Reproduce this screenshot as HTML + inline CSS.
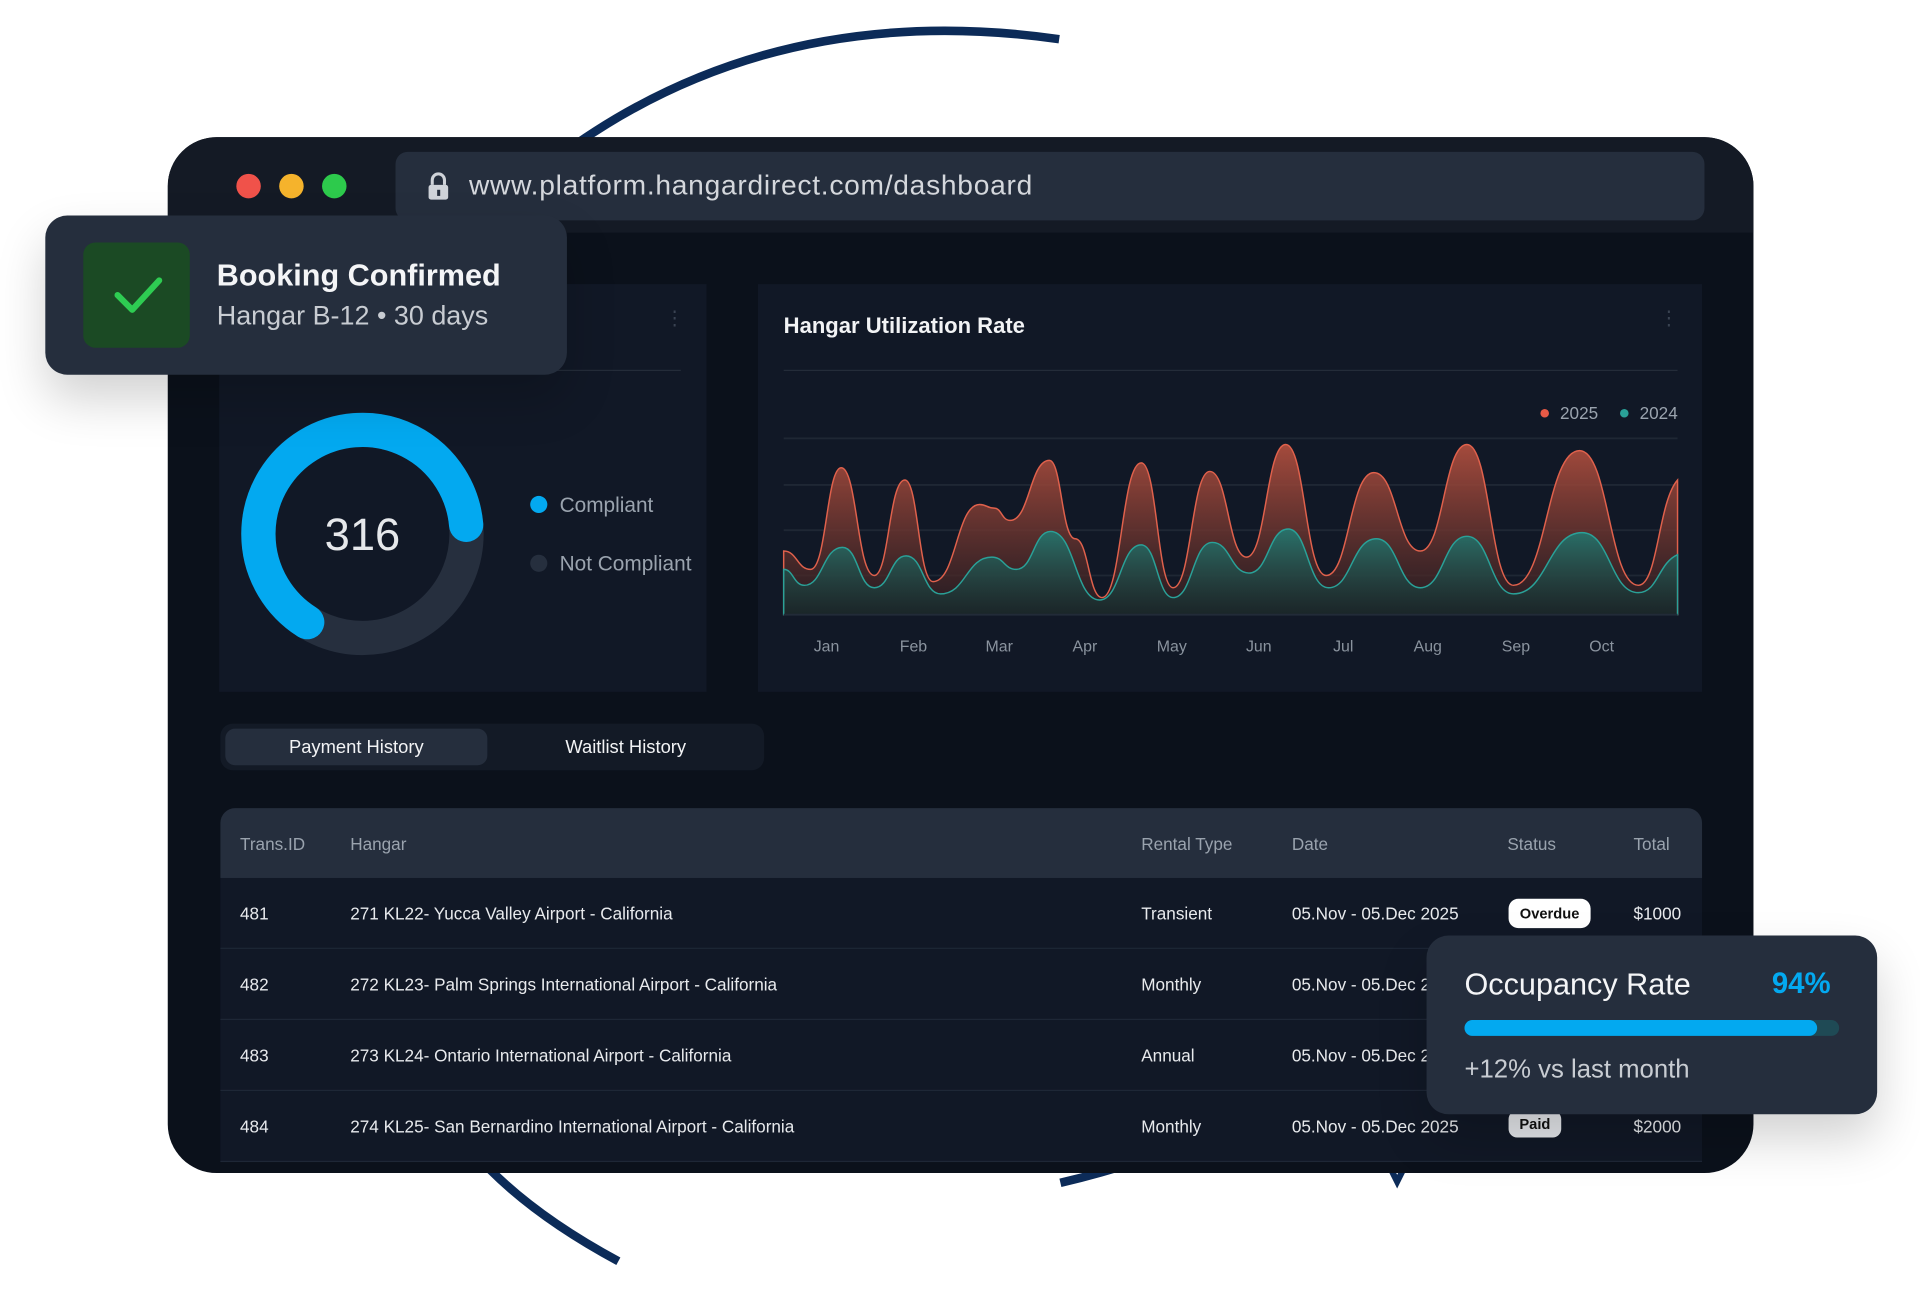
<!DOCTYPE html>
<html><head><meta charset="utf-8"><style>
*{margin:0;padding:0;box-sizing:border-box}
html,body{width:1920px;height:1310px;overflow:hidden;background:#fff}
#s{position:absolute;left:0;top:0;width:1568px;height:1070px;transform:scale(1.22449);transform-origin:0 0;font-family:"Liberation Sans",sans-serif}
.a{position:absolute}
.t{position:absolute;white-space:nowrap;line-height:1}
#win{left:137px;top:112px;width:1295px;height:846px;border-radius:40px;background:#0b111b;overflow:hidden}
.row{position:absolute;left:0;width:1210px;height:58px;background:#111826;border-bottom:1.5px solid #1e2736}
.row .t{font-size:14px;color:#e8eaed;top:22px}
</style></head><body><div id="s">
<svg class="a" style="left:0;top:0" width="1568" height="1070">
<path d="M470 118 Q640 0 865 32" stroke="#0c2b58" stroke-width="7" fill="none"/>
<path d="M400 955 Q440 995 505 1030" stroke="#0c2b58" stroke-width="7" fill="none"/>
<path d="M866 966 Q900 958 930 948" stroke="#0c2b58" stroke-width="7" fill="none"/>
<path d="M1136 955 L1141 965 L1146 955" stroke="#0c2b58" stroke-width="5" fill="none"/>
</svg>
<div id="win" class="a">
 <div class="a" style="left:0;top:0;width:1295px;height:78px;background:#141a25"></div>
 <div class="a" style="left:56px;top:30px;width:20px;height:20px;border-radius:50%;background:#f0524a"></div>
 <div class="a" style="left:91px;top:30px;width:20px;height:20px;border-radius:50%;background:#f5b32c"></div>
 <div class="a" style="left:126px;top:30px;width:20px;height:20px;border-radius:50%;background:#2dca4c"></div>
 <div class="a" style="left:186px;top:12px;width:1069px;height:56px;border-radius:10px;background:#252e3d"></div>
 <svg class="a" style="left:210px;top:27px" width="22" height="26"><path d="M6 12 V8 a5 5 0 0 1 10 0 V12" stroke="#cfd3d9" stroke-width="2.5" fill="none"/><rect x="3" y="12" width="16" height="12" rx="2" fill="#cfd3d9"/><rect x="10" y="16" width="2.5" height="5" fill="#252e3d"/></svg>
 <div class="t" style="left:246px;top:28px;font-size:23px;letter-spacing:0.6px;color:#d4d7dc">www.platform.hangardirect.com/dashboard</div>

 <div class="a" style="left:42px;top:120px;width:398px;height:333px;background:#111826"></div>
 <div class="a" style="left:48px;top:190px;width:371px;height:1px;background:#242c39"></div>
 <div class="t" style="left:406px;top:141px;font-size:16px;color:#3a4352">⋮</div>
 <svg class="a" style="left:59px;top:225px" width="200" height="200">
  <circle cx="100" cy="99" r="85" stroke="#262f3e" stroke-width="28" fill="none"/>
  <path d="M54.9 171.1 A85 85 0 1 1 184.7 91.6" stroke="#03a9f0" stroke-width="28" fill="none" stroke-linecap="round"/>
 </svg>
 <div class="t" style="left:109px;top:306px;width:100px;text-align:center;font-size:37px;color:#e6e8eb">316</div>
 <div class="a" style="left:296px;top:293px;width:14px;height:14px;border-radius:50%;background:#03a9f0"></div>
 <div class="t" style="left:320px;top:292px;font-size:17px;color:#9aa3ae">Compliant</div>
 <div class="a" style="left:296px;top:341px;width:14px;height:14px;border-radius:50%;background:#262f3e"></div>
 <div class="t" style="left:320px;top:340px;font-size:17px;color:#9aa3ae">Not Compliant</div>

 <div class="a" style="left:482px;top:120px;width:771px;height:333px;background:#111826"></div>
 <div class="t" style="left:503px;top:145px;font-size:18px;font-weight:bold;color:#f2f3f5">Hangar Utilization Rate</div>
 <div class="t" style="left:1218px;top:141px;font-size:16px;color:#3a4352">⋮</div>
 <div class="a" style="left:503px;top:190px;width:730px;height:1px;background:#242c39"></div>
 <div class="a" style="left:1121px;top:222px;width:7px;height:7px;border-radius:50%;background:#e85a46"></div>
 <div class="t" style="left:1137px;top:218px;font-size:14px;color:#9aa3ae">2025</div>
 <div class="a" style="left:1186px;top:222px;width:7px;height:7px;border-radius:50%;background:#2aa198"></div>
 <div class="a" style="left:1202px;top:218px;width:31px;height:16px;overflow:hidden"><div class="t" style="left:0;top:0;font-size:14px;color:#9aa3ae">2024</div></div>
</div>
<svg class="a" style="left:0;top:0" width="1568" height="1070">
 <defs>
  <linearGradient id="gr" x1="0" y1="0" x2="0" y2="1"><stop offset="0" stop-color="#b5503f" stop-opacity=".9"/><stop offset="1" stop-color="#2a1c20" stop-opacity=".7"/></linearGradient>
  <linearGradient id="gt" x1="0" y1="0" x2="0" y2="1"><stop offset="0" stop-color="#237a72" stop-opacity=".9"/><stop offset="1" stop-color="#12302f" stop-opacity=".5"/></linearGradient>
 </defs>
 <g stroke="#1f2734" stroke-width="1.5"><line x1="640" y1="358" x2="1370" y2="358"/><line x1="640" y1="396" x2="1370" y2="396"/><line x1="640" y1="433" x2="1370" y2="433"/><line x1="640" y1="470" x2="1370" y2="470"/></g>
 <path fill="url(#gr)" stroke="#e0614c" stroke-width="1.2" d="M640 450 C651 450,651 465,662 465 C675 465,675 382,687 382 C700 382,700 470,714 470 C726 470,726 392,739 392 C750 392,750 475,762 475 C781 475,781 412,800 412 C806 412,806 415,812 415 C818 415,818 425,825 425 C841 425,841 376,857 376 C867 376,867 440,878 440 C889 440,889 488,900 488 C916 488,916 378,932 378 C945 378,945 480,958 480 C973 480,973 385,988 385 C1003 385,1003 455,1018 455 C1034 455,1034 363,1050 363 C1066 363,1066 470,1083 470 C1102 470,1102 386,1122 386 C1141 386,1141 450,1160 450 C1179 450,1179 363,1198 363 C1217 363,1217 478,1236 478 C1263 478,1263 368,1290 368 C1314 368,1314 478,1338 478 C1354 478,1354 410,1370 392 L1370 502 L640 502 Z"/>
 <path fill="url(#gt)" stroke="#2aa198" stroke-width="1.2" d="M640 465 C648 465,648 478,657 478 C672 478,672 447,688 447 C701 447,701 480,714 480 C727 480,727 454,740 454 C754 454,754 485,768 485 C789 485,789 455,810 455 C820 455,820 465,830 465 C844 465,844 434,858 434 C878 434,878 490,898 490 C915 490,915 445,932 445 C945 445,945 488,958 488 C974 488,974 443,990 443 C1005 443,1005 468,1020 468 C1036 468,1036 432,1052 432 C1068 432,1068 480,1085 480 C1104 480,1104 440,1124 440 C1142 440,1142 480,1160 480 C1179 480,1179 438,1198 438 C1217 438,1217 485,1236 485 C1264 485,1264 435,1292 435 C1315 435,1315 484,1338 484 C1354 484,1354 460,1370 453 L1370 502 L640 502 Z"/>
 <line x1="640" y1="502" x2="1370" y2="502" stroke="#222b38" stroke-width="1.5"/>
 <g font-family="Liberation Sans" font-size="13" fill="#8a939e" text-anchor="middle"><text x="675" y="532">Jan</text><text x="746" y="532">Feb</text><text x="816" y="532">Mar</text><text x="886" y="532">Apr</text><text x="957" y="532">May</text><text x="1028" y="532">Jun</text><text x="1097" y="532">Jul</text><text x="1166" y="532">Aug</text><text x="1238" y="532">Sep</text><text x="1308" y="532">Oct</text></g>
</svg>

<div class="a" style="left:137px;top:112px;width:1295px;height:846px;border-radius:40px;overflow:hidden;pointer-events:none">
 <div class="a" style="left:43px;top:479px;width:444px;height:38px;border-radius:10px;background:#131a26"></div>
 <div class="a" style="left:47px;top:483px;width:214px;height:30px;border-radius:8px;background:#252e3d"></div>
 <div class="t" style="left:47px;top:491px;width:214px;text-align:center;font-size:15px;color:#f2f3f5">Payment History</div>
 <div class="t" style="left:270px;top:491px;width:208px;text-align:center;font-size:15px;color:#f2f3f5">Waitlist History</div>
 <div class="a" style="left:43px;top:548px;width:1210px;height:300px">
  <div class="a" style="left:0;top:0;width:1210px;height:57px;background:#252e3d;border-radius:12px 12px 0 0">
   <div class="t" style="left:16px;top:22px;font-size:14px;color:#9aa3ae">Trans.ID</div>
   <div class="t" style="left:106px;top:22px;font-size:14px;color:#9aa3ae">Hangar</div>
   <div class="t" style="left:752px;top:22px;font-size:14px;color:#9aa3ae">Rental Type</div>
   <div class="t" style="left:875px;top:22px;font-size:14px;color:#9aa3ae">Date</div>
   <div class="t" style="left:1051px;top:22px;font-size:14px;color:#9aa3ae">Status</div>
   <div class="t" style="left:1154px;top:22px;font-size:14px;color:#9aa3ae">Total</div>
  </div>
  <div class="row" style="top:57px"><div class="t" style="left:16px">481</div><div class="t" style="left:106px">271 KL22- Yucca Valley Airport - California</div><div class="t" style="left:752px">Transient</div><div class="t" style="left:875px">05.Nov - 05.Dec 2025</div><div class="a" style="left:1052px;top:17px;width:67px;height:24px;border-radius:8px;background:#fff;font-size:12px;font-weight:bold;color:#111;text-align:center;line-height:24px">Overdue</div><div class="t" style="left:1154px">$1000</div></div>
  <div class="row" style="top:115px"><div class="t" style="left:16px">482</div><div class="t" style="left:106px">272 KL23- Palm Springs International Airport - California</div><div class="t" style="left:752px">Monthly</div><div class="t" style="left:875px">05.Nov - 05.Dec 2025</div></div>
  <div class="row" style="top:173px"><div class="t" style="left:16px">483</div><div class="t" style="left:106px">273 KL24- Ontario International Airport - California</div><div class="t" style="left:752px">Annual</div><div class="t" style="left:875px">05.Nov - 05.Dec 2025</div></div>
  <div class="row" style="top:231px"><div class="t" style="left:16px">484</div><div class="t" style="left:106px">274 KL25- San Bernardino International Airport - California</div><div class="t" style="left:752px">Monthly</div><div class="t" style="left:875px">05.Nov - 05.Dec 2025</div><div class="a" style="left:1052px;top:16px;width:43px;height:22px;border-radius:7px;background:#e5e7eb;font-size:12px;font-weight:bold;color:#111;text-align:center;line-height:22px">Paid</div><div class="t" style="left:1154px">$2000</div></div>
 </div>
</div>

<div class="a" style="left:37px;top:176px;width:426px;height:130px;border-radius:18px;background:#252e3d;box-shadow:0 20px 40px rgba(0,0,0,.18)">
 <div class="a" style="left:31px;top:22px;width:87px;height:86px;border-radius:10px;background:#1b4a24"></div>
 <svg class="a" style="left:55px;top:45px" width="42" height="40"><path d="M4 20 L16 32 L38 8" stroke="#2ecc52" stroke-width="5" fill="none" stroke-linecap="round" stroke-linejoin="round"/></svg>
 <div class="t" style="left:140px;top:37px;font-size:25px;font-weight:bold;color:#f4f5f7">Booking Confirmed</div>
 <div class="t" style="left:140px;top:71px;font-size:22px;color:#c8ccd2">Hangar B-12 • 30 days</div>
</div>

<div class="a" style="left:1165px;top:764px;width:368px;height:146px;border-radius:18px;background:#252e3d;box-shadow:0 20px 40px rgba(0,0,0,.18)">
 <div class="t" style="left:31px;top:28px;font-size:25px;color:#f4f5f7">Occupancy Rate</div>
 <div class="t" style="left:282px;top:28px;font-size:24px;font-weight:bold;color:#03a9f0">94%</div>
 <div class="a" style="left:31px;top:69px;width:306px;height:13px;border-radius:7px;background:#1f4a55"></div>
 <div class="a" style="left:31px;top:69px;width:288px;height:13px;border-radius:7px;background:#03a9f0"></div>
 <div class="t" style="left:31px;top:99px;font-size:21px;color:#c8ccd2">+12% vs last month</div>
</div>
</div></body></html>
